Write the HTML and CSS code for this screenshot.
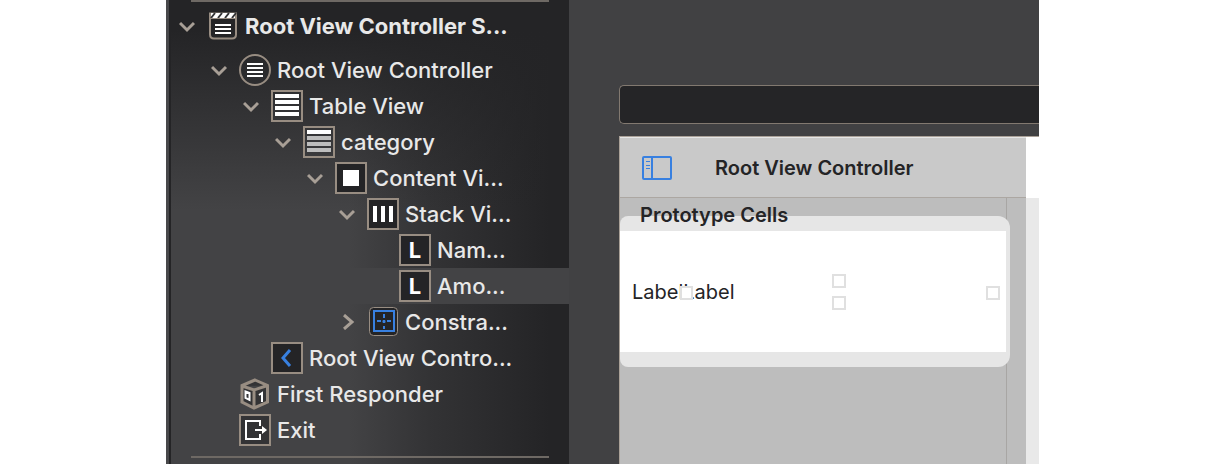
FILE: index.html
```html
<!DOCTYPE html>
<html lang="en">
<head>
<meta charset="utf-8">
<title>Interface Builder</title>
<link rel="stylesheet" href="styles.css">
</head>
<body>
<div class="window">
  <nav class="outline" aria-label="Document outline">
    <hr class="rule">
    <ul class="tree">
      <li class="row scene">
        <button class="toggle" aria-label="Collapse"><svg viewBox="0 0 16 16"><path d="M1 5l7 7 7-7"/></svg></button>
        <svg class="icon" viewBox="0 0 32 32"><path class="line" d="M3 3.500h26v21q0 4-4 4H7q-4 0-4-4z"/><path class="white" d="M4 3h24v5H4z"/><path class="slash" d="M4 8l4-5M11 8l4-5M18 8l4-5M25 8l4-5"/><path class="line thin" d="M3 8.500h26"/><path class="white" d="M8 14h16v2H8zM8 18h16v2H8zM8 22h16v2H8z"/></svg>
        <span class="name">Root View Controller S...</span>
      </li>
      <li class="row d1">
        <button class="toggle" aria-label="Collapse"><svg viewBox="0 0 16 16"><path d="M1 5l7 7 7-7"/></svg></button>
        <svg class="icon" viewBox="0 0 32 32"><circle class="line" cx="16" cy="16" r="15"/><path class="white" d="M8 9h16v2H8zM8 13h16v2H8zM8 17h16v2H8zM8 21h16v2H8z"/></svg>
        <span class="name">Root View Controller</span>
      </li>
      <li class="row d2">
        <button class="toggle" aria-label="Collapse"><svg viewBox="0 0 16 16"><path d="M1 5l7 7 7-7"/></svg></button>
        <svg class="icon" viewBox="0 0 32 32"><path class="line" d="M1 1h30v30H1z"/><path class="white" d="M4 4h24v4H4zM4 10h24v4H4zM4 16h24v4H4zM4 22h24v4H4z"/></svg>
        <span class="name">Table View</span>
      </li>
      <li class="row d3">
        <button class="toggle" aria-label="Collapse"><svg viewBox="0 0 16 16"><path d="M1 5l7 7 7-7"/></svg></button>
        <svg class="icon" viewBox="0 0 32 32"><path class="line" d="M1 1h30v30H1z"/><path class="white" d="M4 4h24v4H4z"/><path class="gray" d="M4 10h24v4H4zM4 16h24v4H4zM4 22h24v4H4z"/></svg>
        <span class="name">category</span>
      </li>
      <li class="row d4">
        <button class="toggle" aria-label="Collapse"><svg viewBox="0 0 16 16"><path d="M1 5l7 7 7-7"/></svg></button>
        <svg class="icon" viewBox="0 0 32 32"><path class="line dark" d="M1 1h30v30H1z"/><path class="white" d="M8 8h16v16H8z"/></svg>
        <span class="name">Content Vi...</span>
      </li>
      <li class="row d5">
        <button class="toggle" aria-label="Collapse"><svg viewBox="0 0 16 16"><path d="M1 5l7 7 7-7"/></svg></button>
        <svg class="icon" viewBox="0 0 32 32"><path class="line dark" d="M1 1h30v30H1z"/><path class="white" d="M6 8h4v16H6zM14 8h4v16h-4zM22 8h4v16h-4z"/></svg>
        <span class="name">Stack Vi...</span>
      </li>
      <li class="row d6">
        <span class="toggle"></span>
        <span class="icon letter">L</span>
        <span class="name">Nam...</span>
      </li>
      <li class="row d6 selected">
        <span class="toggle"></span>
        <span class="icon letter">L</span>
        <span class="name">Amo...</span>
      </li>
      <li class="row d5">
        <button class="toggle" aria-label="Expand"><svg viewBox="0 0 16 16"><path d="M5 1l8 7-8 7"/></svg></button>
        <svg class="icon" viewBox="0 0 32 32"><rect class="line dark thin" x="2.500" y="1.500" width="28" height="28" rx="4"/><path class="blue" d="M7 5h20v20H7zM17 8v4M17 14v3M17 20v3M10 15h4M15.500 15.500h3M20 15h4"/></svg>
        <span class="name">Constra...</span>
      </li>
      <li class="row d2">
        <span class="toggle"></span>
        <svg class="icon" viewBox="0 0 32 32"><path class="line dark" d="M1 1h30v30H1z"/><path class="blue back" d="M19 8l-7 8 7 8"/></svg>
        <span class="name">Root View Contro...</span>
      </li>
      <li class="row d1">
        <span class="toggle"></span>
        <svg class="icon" viewBox="0 0 32 32"><path class="line dim cube" d="M16 2l12.500 5.500v16.500L15 30 3 24V7.500zM3 8l12 4 13.500-4.500M15 12v17"/><path class="digit" d="M6.500 13.500l4 1.500v7l-4-2zM20 17l3-2v9"/></svg>
        <span class="name">First Responder</span>
      </li>
      <li class="row d1">
        <span class="toggle"></span>
        <svg class="icon" viewBox="0 0 32 32"><path class="line dim" d="M1 1h30v30H1z"/><path class="exit" d="M21 12V7H7v18h14v-5M16 16h10"/><path class="white" d="M23 12l5 4-5 4z"/></svg>
        <span class="name">Exit</span>
      </li>
    </ul>
    <hr class="rule">
  </nav>
  <main class="canvas">
    <div class="bar"></div>
    <div class="stage">
      <section class="device">
        <header class="navbar">
          <button class="split" aria-label="Sidebar"><svg viewBox="0 0 30 24"><rect x="1" y="1" width="28" height="22" rx="1"/><path d="M10 1v22"/><path class="ticks" d="M4 5.500h4M4 9.500h4M4 12.500h4"/></svg></button>
          <h1 class="title">Root View Controller</h1>
        </header>
        <div class="table">
          <h2 class="section">Prototype Cells</h2>
          <div class="halo">
            <div class="cell">
              <span>Label</span><span>Label</span>
              <i class="handle start"></i><i class="handle above"></i><i class="handle below"></i><i class="handle end"></i>
            </div>
          </div>
        </div>
      </section>
      <aside class="detail"><div class="detail-bar"></div></aside>
    </div>
  </main>
</div>
</body>
</html>
```
FILE: styles.css
```css
* { box-sizing: border-box; }
body {
  margin: 0;
  background: #fff;
  font-family: Inter, "Liberation Sans", sans-serif;
}
button { padding: 0; border: 0; background: none; }
.window {
  display: flex;
  height: 100vh;
  margin: 0 167px 0 166px;
  overflow: hidden;
  background: #434345;
}
.outline {
  flex: 0 0 403px;
  border-left: 3px solid #48484a;
  box-shadow: inset 2px 0 #242426;
  padding-left: 2px;
  background:
    linear-gradient(#242426 30px, transparent 210px),
    linear-gradient(to right, #434345 45%, #333335 65%, #242426 95%);
}
.rule {
  height: 2px;
  margin: 0 20px;
  border: 0;
  background: #6e6964;
}
.tree { margin: 0; padding: 6px 0 8px; list-style: none; }
.row {
  display: flex;
  align-items: center;
  height: 36px;
  padding-left: 8px;
  color: #e8e8e8;
  font-size: 22px;
  font-weight: 500;
  line-height: 28px;
  white-space: nowrap;
}
.scene { margin-bottom: 8px; font-weight: 700; }
.d1 { padding-left: 40px; }
.d2 { padding-left: 72px; }
.d3 { padding-left: 104px; }
.d4 { padding-left: 136px; }
.d5 { padding-left: 168px; }
.d6 { padding-left: 200px; }
.selected { background: #434345; }
.toggle { flex: none; width: 16px; height: 16px; margin-right: 12px; }
.toggle svg { display: block; fill: none; stroke: #a89f96; stroke-width: 3; }
.icon { flex: none; width: 32px; height: 32px; margin-right: 6px; fill: none; }
.line { stroke: #988d82; stroke-width: 2; }
.thin { stroke-width: 1; }
.cube { stroke-width: 3; }
.dark { fill: #242426; }
.dim { fill: #333335; }
.white { fill: #fff; }
.gray { fill: #bdbdbd; }
.slash { stroke: #333335; stroke-width: 2; }
.blue { stroke: #3880e0; stroke-width: 2; }
.back { stroke-width: 3; }
.digit { stroke: #fff; stroke-width: 2; }
.exit { stroke: #fff; stroke-width: 2; }
.letter {
  border: 2px solid #988d82;
  background: #242426;
  color: #fff;
  font-weight: 700;
  text-align: center;
}
.canvas {
  flex: 1;
  display: flex;
  flex-direction: column;
  gap: 12px;
  min-width: 0;
  padding: 85px 0 0 50px;
  background: #414143;
}
.bar {
  flex: none;
  height: 39px;
  border: 1px solid #827970;
  border-right: 0;
  border-radius: 5px 0 0 5px;
  background: #252527;
}
.stage { flex: 1; display: flex; border-top: 1px solid #aaa198; }
.device {
  flex: 1;
  border-left: 1px solid #aaa198;
  background: linear-gradient(#a8a6a4, #a8a6a4) right 19px top / 1px 100% no-repeat #bdbdbd;
}
.navbar {
  display: flex;
  align-items: center;
  height: 61px;
  padding-left: 22px;
  border-top: 1px solid #e6e6e6;
  border-bottom: 1px solid #aca7a2;
  background: #c9c9c9;
}
.split { width: 30px; height: 24px; margin-right: 43px; }
.split svg { display: block; fill: none; stroke: #3880e0; stroke-width: 2; }
.split .ticks { stroke-width: 1; }
.title, .section { margin: 0; color: #242426; font-size: 20px; font-weight: 600; }
.section { position: relative; z-index: 1; padding-left: 20px; line-height: 34px; }
.halo {
  margin: -16px 16px 0 0;
  padding: 15px 4px 15px 0;
  border-radius: 8px 12px 12px 8px;
  background: #e6e6e6;
}
.cell {
  position: relative;
  display: flex;
  align-items: center;
  height: 121px;
  padding-left: 12px;
  background: #fff;
  color: #242426;
  font-size: 20px;
  line-height: 24px;
}
.handle {
  position: absolute;
  width: 14px;
  height: 14px;
  border: 2px solid #e0e0e0;
  background: #fff;
}
.start { left: 60px; top: 55px; width: 13px; }
.above { right: 160px; top: 43px; }
.below { right: 160px; top: 65px; }
.end { right: 6px; top: 55px; }
.detail { flex: 0 0 13px; background: #e9e9e9; }
.detail-bar { height: 61px; background: #fff; }
```
